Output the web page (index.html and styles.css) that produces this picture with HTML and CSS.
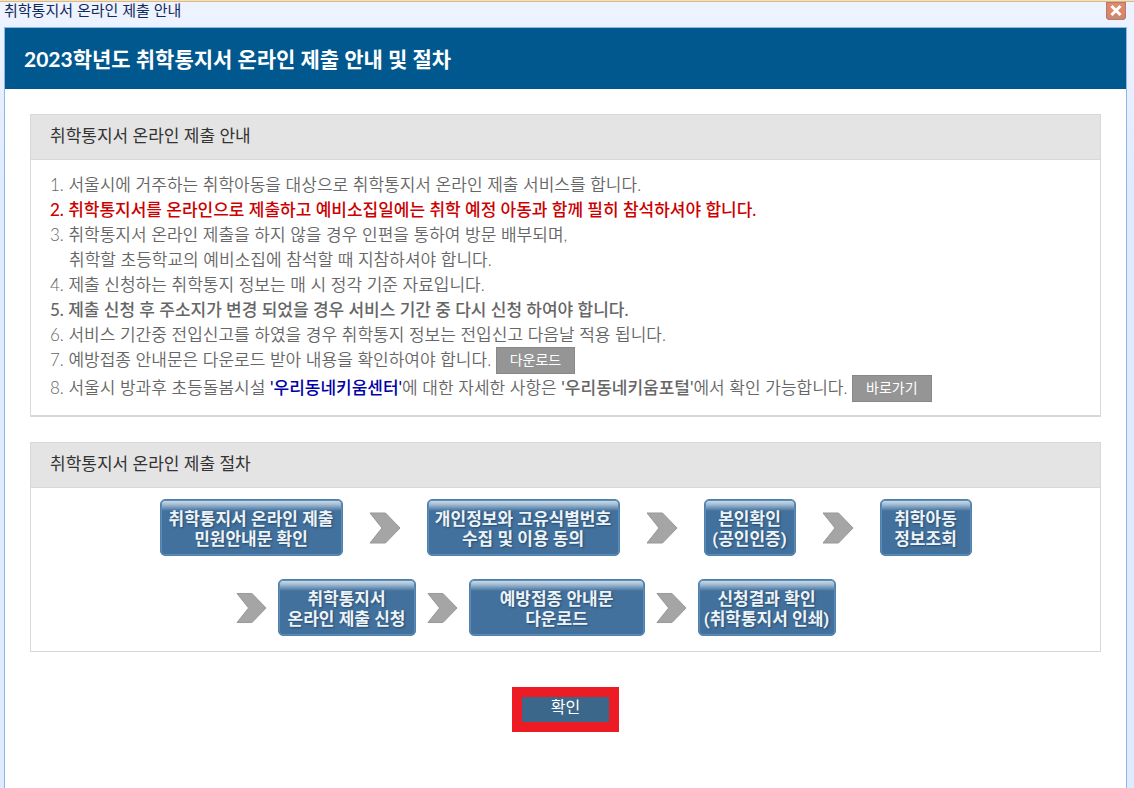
FILE: index.html
```html
<!DOCTYPE html>
<html lang="ko">
<head>
<meta charset="utf-8">
<title>취학통지서 온라인 제출 안내</title>
<link rel="stylesheet" href="styles.css">
</head>
<body>
<svg class="defs" aria-hidden="true">
  <symbol id="arrow" viewBox="0 0 32 32">
    <path d="M1 1H16.500L31 16L16.500 31H1L13 16Z" fill="#a5a5a5" stroke="#979797" stroke-width="1"/>
  </symbol>
</svg>
<div class="window">
  <div class="titlebar">
    <span class="titlebar-text">취학통지서 온라인 제출 안내</span>
    <button class="close" type="button" aria-label="닫기">
      <svg viewBox="0 0 20 18" width="20" height="18" aria-hidden="true">
        <path d="M6.500 5L13.500 12M13.500 5L6.500 12" stroke="#fff" stroke-width="3" stroke-linecap="square"/>
      </svg>
    </button>
  </div>
  <main class="frame">
    <h1 class="banner">2023학년도 취학통지서 온라인 제출 안내 및 절차</h1>
    <div class="content">
      <section class="panel panel-guide">
        <h2 class="panel-head">취학통지서 온라인 제출 안내</h2>
        <div class="guide">
          <p>1. 서울시에 거주하는 취학아동을 대상으로 취학통지서 온라인 제출 서비스를 합니다.</p>
          <p class="warn">2. 취학통지서를 온라인으로 제출하고 예비소집일에는 취학 예정 아동과 함께 필히 참석하셔야 합니다.</p>
          <p>3. 취학통지서 온라인 제출을 하지 않을 경우 인편을 통하여 방문 배부되며,</p>
          <p class="continued">취학할 초등학교의 예비소집에 참석할 때 지참하셔야 합니다.</p>
          <p>4. 제출 신청하는 취학통지 정보는 매 시 정각 기준 자료입니다.</p>
          <p class="strong">5. 제출 신청 후 주소지가 변경 되었을 경우 서비스 기간 중 다시 신청 하여야 합니다.</p>
          <p>6. 서비스 기간중 전입신고를 하였을 경우 취학통지 정보는 전입신고 다음날 적용 됩니다.</p>
          <p>7. 예방접종 안내문은 다운로드 받아 내용을 확인하여야 합니다. <button class="small-btn" type="button">다운로드</button></p>
          <p>8. 서울시 방과후 초등돌봄시설 <b class="center-name">'우리동네키움센터'</b>에 대한 자세한 사항은 <b>'우리동네키움포털'</b>에서 확인 가능합니다. <button class="small-btn" type="button">바로가기</button></p>
        </div>
      </section>
      <section class="panel">
        <h2 class="panel-head">취학통지서 온라인 제출 절차</h2>
        <div class="flow">
          <div class="flow-rows">
            <div class="flow-row">
              <div class="step step-notice">취학통지서 온라인 제출<br>민원안내문 확인</div>
              <svg class="arrow"><use href="#arrow"/></svg>
              <div class="step step-consent">개인정보와 고유식별번호<br>수집 및 이용 동의</div>
              <svg class="arrow"><use href="#arrow"/></svg>
              <div class="step step-short">본인확인<br>(공인인증)</div>
              <svg class="arrow"><use href="#arrow"/></svg>
              <div class="step step-short">취학아동<br>정보조회</div>
            </div>
            <div class="flow-row flow-row-next">
              <svg class="arrow"><use href="#arrow"/></svg>
              <div class="step step-medium">취학통지서<br>온라인 제출 신청</div>
              <svg class="arrow"><use href="#arrow"/></svg>
              <div class="step step-download">예방접종 안내문<br>다운로드</div>
              <svg class="arrow"><use href="#arrow"/></svg>
              <div class="step step-medium">신청결과 확인<br>(취학통지서 인쇄)</div>
            </div>
          </div>
        </div>
      </section>
      <div class="actions">
        <div class="highlight"><button class="confirm" type="button">확인</button></div>
      </div>
    </div>
  </main>
</div>
</body>
</html>
```
FILE: styles.css
```css
* { box-sizing: border-box; }

body {
  margin: 0;
  font-family: Lato, "Noto Sans CJK KR", "Noto Sans", sans-serif;
  font-size: 17px;
  color: #666;
  background: #dfebff;
}

button { font-family: inherit; cursor: pointer; }

.defs { display: none; }

.window {
  display: flex;
  flex-direction: column;
  min-height: 100vh;
  padding: 0 7px 0 4px;
  border-top: 1px solid #fbdfae;
  background: linear-gradient(#edf3ff 0, #eaf1ff 60px, #dfebff 180px);
  box-shadow: inset 0 1px #d2bb94;
}

.titlebar {
  display: flex;
  justify-content: space-between;
  align-items: flex-start;
  height: 26px;
  padding-right: 1px;
}

.titlebar-text {
  font-family: "Noto Sans", "Noto Sans CJK KR", sans-serif;
  font-size: 15px;
  line-height: 18px;
  color: #15295c;
}

.close {
  width: 20px;
  height: 18px;
  margin-top: 1px;
  padding: 0;
  border: 0;
  border-radius: 0 0 4px 4px;
  background: linear-gradient(#e08a6c, #df8467 60%, #bd8d77);
  box-shadow: inset 0 0 0 1px #b57772;
}

.close svg { display: block; }

.frame {
  flex: 1;
  border: 1px solid #8fb5ea;
  border-bottom: 0;
  background: #fff;
}

.banner {
  margin: 0;
  padding: 0 19px;
  font-size: 21px;
  font-weight: 700;
  line-height: 61px;
  color: #fff;
  background: #00588f;
}

.content { padding: 25px; }

.panel {
  margin-bottom: 35px;
  border: 1px solid #d8d8d8;
}

.panel-guide {
  margin-bottom: 25px;
  border-bottom-width: 2px;
}

.panel-head {
  margin: 0;
  padding: 0 19px 2px;
  border-bottom: 1px solid #d8d8d8;
  font-size: 17px;
  font-weight: 400;
  line-height: 42px;
  color: #333;
  background: #e4e4e4;
}

.guide {
  padding: 12px 19px;
  font-weight: 350;
}

.guide p { margin: 0; line-height: 25px; }
.guide .continued { padding-left: 19px; }
.guide .strong { font-weight: 500; }
.guide .warn { font-weight: 500; color: #c00; }
.guide b { font-weight: 500; }
.guide .center-name { color: #0000a8; }

.small-btn {
  height: 27px;
  margin: 0 0 1px;
  padding: 0 13px 2px;
  border: 1px solid #888;
  font-size: 14px;
  line-height: 23px;
  vertical-align: top;
  color: #fff;
  background: #959595;
}

.flow {
  display: flex;
  justify-content: center;
  padding: 11px 0 15px;
}

.flow-rows {
  display: grid;
  gap: 23px;
}

.flow-row {
  display: flex;
  align-items: center;
  gap: 26px;
}

.flow-row-next {
  gap: 11px;
  padding-left: 76px;
}

.step {
  height: 57px;
  padding-top: 9px;
  border: 1px solid #4d81ae;
  border-radius: 5px;
  font-family: Roboto, "Noto Sans CJK KR", sans-serif;
  font-weight: 700;
  line-height: 20px;
  text-align: center;
  white-space: nowrap;
  color: #eef3f7;
  text-shadow: 1px 1px 2px #244a6d;
  background: linear-gradient(#d3e0ec 0, #a9c1d7 4px, #42719d 11px);
  box-shadow: inset 0 0 0 1px #5c8bb5;
}

.step-notice { width: 183px; }
.step-consent { width: 193px; }
.step-short { width: 92px; }
.step-medium { width: 138px; }
.step-download { width: 176px; }

.arrow {
  flex: none;
  width: 32px;
  height: 32px;
}

.flow-row-next .arrow { width: 31px; }

.actions {
  display: flex;
  justify-content: center;
}

.highlight {
  padding: 10px;
  background: #ed1c24;
}

.confirm {
  display: block;
  width: 87px;
  height: 25px;
  padding: 0 0 5px;
  border: 0;
  font-size: 16px;
  line-height: 20px;
  color: #fff;
  background: #3b678a;
}
```
